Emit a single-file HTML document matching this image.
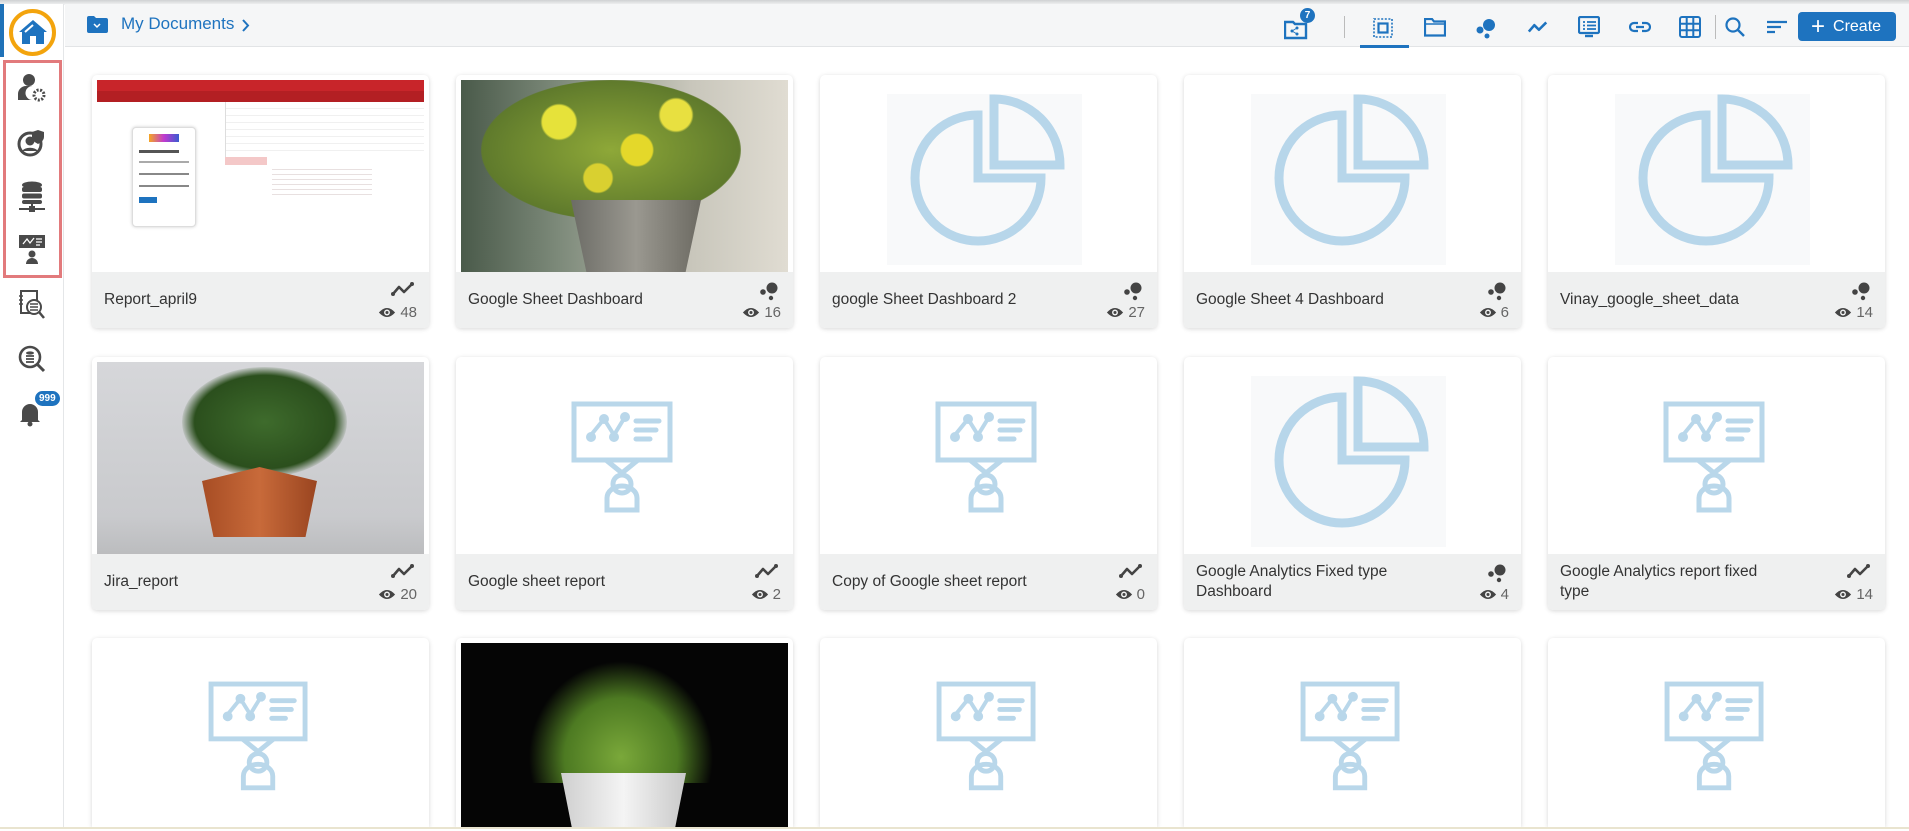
<!DOCTYPE html>
<html style="width:1909px;height:831px;overflow:hidden"><head><meta charset="utf-8"><style>
*{box-sizing:border-box;margin:0;padding:0}
body{width:1909px;height:831px;overflow:hidden;background:#fff;font-family:"Liberation Sans",sans-serif;position:relative}
#wrap{position:absolute;left:0;top:0;width:1909px;height:831px;overflow:hidden}
.topline{position:absolute;left:0;top:0;width:1909px;height:5px;background:linear-gradient(#cfd1d3,#f4f5f6)}
.side{position:absolute;left:0;top:4px;width:64px;height:823px;background:#fff;border-right:1px solid #e4e6e8}
.hdr{position:absolute;left:65px;top:4px;width:1844px;height:43px;background:#f5f6f7;border-bottom:1px solid #e2e4e6}
.card{position:absolute;width:337px;height:253px;background:#fff;border-radius:5px;box-shadow:0 1px 5px rgba(0,0,0,.16);overflow:hidden}
.r3{height:189px;border-radius:5px 5px 0 0}
.img{position:absolute;left:5px;top:5px;width:327px;height:193px;overflow:hidden}
.r3 .img{height:184px}
.ft{position:absolute;left:0;top:197px;width:337px;height:56px;background:#eff0f0}
.tt{position:absolute;left:12px;top:0;height:56px;width:225px;display:flex;align-items:center;font-size:15.5px;color:#333;line-height:20px}
.ty{position:absolute;right:14px;top:9px}
.vw{position:absolute;right:12px;top:32px;font-size:15px;color:#666;display:flex;align-items:center;gap:4px}
</style></head><body><div id="wrap">
<svg width="0" height="0" style="position:absolute">
<defs>
<symbol id="pie" viewBox="0 0 337 193"><rect x="67" y="19" width="195" height="171" fill="#f8f9fa"/><path d="M158 40 A63 63 0 1 0 221 103 L158 103 Z" fill="none" stroke="#b7d6ea" stroke-width="9"/><path d="M174 24 A66 66 0 0 1 240 90 L174 90 Z" fill="none" stroke="#b7d6ea" stroke-width="9"/></symbol>
<symbol id="pres" viewBox="0 0 337 193"><g fill="none" stroke="#b9d7ea" stroke-width="5"><rect x="118" y="47" width="96" height="56"/><path d="M150 103 L166 116 L182 103"/><circle cx="166" cy="127" r="9"/><path d="M151 153 V141 a15 12 0 0 1 30 0 V153 Z"/><path d="M135 78 L148 62 L158 78 L169 60" stroke-width="4"/><path d="M180 64h23M180 73h20M180 82h14" stroke-linecap="round" stroke-width="5"/></g><g fill="#b9d7ea"><circle cx="135" cy="80" r="5"/><circle cx="148" cy="62" r="5"/><circle cx="158" cy="80" r="5"/><circle cx="169" cy="60" r="5"/></g></symbol>
<symbol id="trend" viewBox="0 0 24 16"><path d="M2 13 L8 6 L13 11 L21 3" fill="none" stroke="#444" stroke-width="2.6" stroke-linejoin="round"/><circle cx="2" cy="13" r="2" fill="#444"/><circle cx="21" cy="3" r="2" fill="#444"/></symbol>
<symbol id="dots" viewBox="0 0 20 20"><circle cx="13" cy="7" r="5.5" fill="#444"/><circle cx="4" cy="11" r="2.8" fill="#444"/><circle cx="12" cy="17" r="2.2" fill="#444"/></symbol>
<symbol id="eye" viewBox="0 0 20 14"><path d="M1 7 Q10 -3 19 7 Q10 17 1 7Z" fill="#444"/><circle cx="10" cy="7" r="3.3" fill="#eff0f0"/><circle cx="10" cy="7" r="1.7" fill="#444"/></symbol>
</defs></svg>
<div class="topline"></div>
<div class="side">
<div style="position:absolute;left:0;top:0;width:4px;height:53px;background:#1f72b8"></div>
<div style="position:absolute;left:9px;top:5px;width:47px;height:47px;border:4px solid #f3a40d;border-radius:50%"></div>
<svg style="position:absolute;left:18px;top:14px" width="30" height="28" viewBox="0 0 30 28"><path d="M15 2 L1 14 L4 14 L4 26 L12 26 L12 18 L18 18 L18 26 L26 26 L26 14 L29 14 Z" fill="#1e73bf"/><path d="M15 7 L7 14" stroke="#fff" stroke-width="2"/></svg>
<div style="position:absolute;left:3px;top:56px;width:59px;height:218px;border:3px solid #e27a7c"></div>
<svg style="position:absolute;left:17px;top:69px" width="30" height="30" viewBox="0 0 30 30"><circle cx="12" cy="7" r="6" fill="#4a4a4a"/><path d="M1 27 v-6 a8 8 0 0 1 8-8 h7 a6 6 0 0 0 -1 14Z" fill="#4a4a4a"/><circle cx="22" cy="22" r="5" fill="none" stroke="#4a4a4a" stroke-width="3" stroke-dasharray="2 1.5"/></svg>
<svg style="position:absolute;left:17px;top:124px" width="30" height="30" viewBox="0 0 30 30"><circle cx="13" cy="16" r="11" fill="none" stroke="#4a4a4a" stroke-width="3"/><circle cx="13" cy="13" r="4.5" fill="#4a4a4a"/><path d="M5 23 a9 6 0 0 1 16 0" fill="#4a4a4a"/><path d="M21 2 l6 2 v5 q0 4 -6 7 q-6 -3 -6 -7 v-5z" fill="#4a4a4a"/></svg>
<svg style="position:absolute;left:18px;top:177px" width="28" height="32" viewBox="0 0 28 32"><ellipse cx="14" cy="4" rx="10" ry="3.5" fill="#4a4a4a"/><rect x="4" y="6" width="20" height="5" rx="2" fill="#4a4a4a"/><rect x="4" y="12.5" width="20" height="5" rx="2" fill="#4a4a4a"/><rect x="4" y="19" width="20" height="4" rx="2" fill="#4a4a4a"/><path d="M1 28h26M14 23v5" stroke="#4a4a4a" stroke-width="2"/><rect x="11" y="25" width="6" height="6" fill="#4a4a4a"/></svg>
<svg style="position:absolute;left:18px;top:230px" width="28" height="32" viewBox="0 0 28 32"><rect x="1" y="1" width="26" height="13" fill="#4a4a4a"/><path d="M5 10 l4-5 l3 4 l4-5 M18 5h6M18 8h6M18 11h4" stroke="#fff" stroke-width="1.3" fill="none"/><circle cx="14" cy="20" r="3.5" fill="#4a4a4a"/><path d="M8 30 a6 6 0 0 1 12 0z" fill="#4a4a4a"/></svg>
<svg style="position:absolute;left:19px;top:286px" width="26" height="30" viewBox="0 0 26 30"><rect x="2" y="1" width="16" height="22" fill="none" stroke="#4a4a4a" stroke-width="2"/><circle cx="15" cy="17" r="7" fill="#fff" stroke="#4a4a4a" stroke-width="2"/><path d="M11 14h8M11 17h8M11 20h8" stroke="#4a4a4a" stroke-width="1.6"/><path d="M20 22 l5 6" stroke="#4a4a4a" stroke-width="2.5"/><path d="M0 6h4M0 10h4M0 14h4" stroke="#4a4a4a" stroke-width="1.5"/></svg>
<svg style="position:absolute;left:18px;top:341px" width="28" height="28" viewBox="0 0 28 28"><circle cx="12" cy="12" r="10" fill="none" stroke="#4a4a4a" stroke-width="2.6"/><path d="M19 19 l7 7" stroke="#4a4a4a" stroke-width="3"/><ellipse cx="12" cy="8" rx="4" ry="1.6" fill="#4a4a4a"/><path d="M8 11h8M8 14h8M8 17h8" stroke="#4a4a4a" stroke-width="1.8"/></svg>
<svg style="position:absolute;left:18px;top:395px" width="24" height="28" viewBox="0 0 24 28"><path d="M4 21 V13 a8 8 0 0 1 16 0 V21 L22 23 H2 Z" fill="#4a4a4a"/><circle cx="12" cy="25" r="2.5" fill="#4a4a4a"/></svg>
<div style="position:absolute;left:34px;top:386px;background:#1e73bf;color:#fff;font-size:10px;font-weight:bold;border-radius:9px;padding:2px 4px;border:1px solid #fff">999</div>
</div>
<div class="hdr">
<svg style="position:absolute;left:22px;top:12px" width="21" height="17" viewBox="0 0 21 17"><path d="M0 2 a2 2 0 0 1 2-2 h5 l2 2 h10 a2 2 0 0 1 2 2 v11 a2 2 0 0 1-2 2 h-17 a2 2 0 0 1-2-2z" fill="#1e73bf"/><path d="M7 8 l3 3 l3-3" stroke="#fff" stroke-width="1.5" fill="none"/></svg>
<div style="position:absolute;left:56px;top:10px;font-size:17px;color:#1e73bf">My Documents</div>
<svg style="position:absolute;left:176px;top:15px" width="9" height="13" viewBox="0 0 9 13"><path d="M2 1 l5 5.5 l-5 5.5" stroke="#1e73bf" stroke-width="2" fill="none"/></svg>
<svg style="position:absolute;left:1219px;top:12px" width="26" height="24" viewBox="0 0 26 24"><path d="M1 6 h8 l2 2 h11 v14 h-21z" fill="none" stroke="#1e73bf" stroke-width="2.4"/><circle cx="8" cy="15" r="1.5" fill="#1e73bf"/><circle cx="13" cy="12" r="1.5" fill="#1e73bf"/><circle cx="13" cy="18" r="1.5" fill="#1e73bf"/><path d="M8 15l5-3M8 15l5 3" stroke="#1e73bf" stroke-width="1"/></svg>
<div style="position:absolute;left:1235px;top:4px;width:15px;height:15px;border-radius:50%;background:#1e73bf;color:#fff;font-size:10px;font-weight:bold;text-align:center;line-height:15px">7</div>
<div style="position:absolute;left:1279px;top:12px;width:1px;height:22px;background:#bbb"></div>
<svg style="position:absolute;left:1308px;top:14px" width="20" height="20" viewBox="0 0 20 20"><rect x="1" y="1" width="18" height="18" fill="none" stroke="#1e73bf" stroke-width="1.6" stroke-dasharray="2 1.6"/><rect x="5.5" y="5.5" width="9" height="9" fill="none" stroke="#1e73bf" stroke-width="2.2"/></svg>
<div style="position:absolute;left:1295px;top:41px;width:49px;height:3px;background:#1e73bf"></div>
<svg style="position:absolute;left:1359px;top:14px" width="22" height="19" viewBox="0 0 22 19"><path d="M1 1 h7 l2 2.5 h11 v14 h-20z" fill="none" stroke="#1e73bf" stroke-width="2.2"/><path d="M1 6h20" stroke="#1e73bf" stroke-width="1.6"/></svg>
<svg style="position:absolute;left:1411px;top:13px" width="20" height="22" viewBox="0 0 20 22"><circle cx="13" cy="8" r="6" fill="#1e73bf"/><circle cx="4" cy="13" r="3.5" fill="#1e73bf"/><circle cx="11" cy="19" r="2.5" fill="#1e73bf"/></svg>
<svg style="position:absolute;left:1462px;top:15px" width="22" height="16" viewBox="0 0 24 16"><path d="M2 13 L8 6 L13 11 L21 3" fill="none" stroke="#1e73bf" stroke-width="2.8" stroke-linejoin="round"/></svg>
<svg style="position:absolute;left:1513px;top:12px" width="22" height="22" viewBox="0 0 22 22"><rect x="1" y="1" width="20" height="16" rx="1.5" fill="none" stroke="#1e73bf" stroke-width="2.2"/><path d="M5 6h2M9 6h9M5 9.5h2M9 9.5h9M5 13h2M9 13h9" stroke="#1e73bf" stroke-width="1.8"/><path d="M7 20h8" stroke="#1e73bf" stroke-width="2.4"/></svg>
<svg style="position:absolute;left:1564px;top:17px" width="22" height="12" viewBox="0 0 22 12"><path d="M9 2 H5 a4 4 0 0 0 0 8 H9 M13 2 H17 a4 4 0 0 1 0 8 H13 M7 6h8" fill="none" stroke="#1e73bf" stroke-width="2.2"/></svg>
<svg style="position:absolute;left:1614px;top:12px" width="22" height="22" viewBox="0 0 22 22"><rect x="1" y="1" width="20" height="20" rx="2" fill="none" stroke="#1e73bf" stroke-width="2"/><path d="M7.7 1v20M14.3 1v20M1 7.7h20M1 14.3h20" stroke="#1e73bf" stroke-width="2"/></svg>
<div style="position:absolute;left:1650px;top:11px;width:1px;height:24px;background:#bbb"></div>
<svg style="position:absolute;left:1660px;top:13px" width="21" height="21" viewBox="0 0 21 21"><circle cx="8" cy="8" r="6.5" fill="none" stroke="#1e73bf" stroke-width="2.2"/><path d="M13 13l6 6" stroke="#1e73bf" stroke-width="2.4"/></svg>
<svg style="position:absolute;left:1702px;top:16px" width="20" height="14" viewBox="0 0 20 14"><path d="M0 2h20M0 7h14M0 12h8" stroke="#1e73bf" stroke-width="2.2"/></svg>
<div style="position:absolute;left:1733px;top:8px;width:98px;height:29px;border-radius:4px;background:#1e73bf;color:#fff;font-size:16px;display:flex;align-items:center;padding-left:13px"><span style="font-size:24px;font-weight:300;margin-right:8px;line-height:20px">+</span>Create</div>
</div>

<div class="card" style="left:92px;top:75px"><div class="img" style="background:#fff">
<div style="position:absolute;left:0;top:0;width:327px;height:11px;background:#c8252a"></div>
<div style="position:absolute;left:0;top:11px;width:327px;height:11px;background:#b31f23"></div>
<div style="position:absolute;left:35px;top:47px;width:64px;height:100px;border:1px solid #ddd;border-radius:4px;background:#fff;box-shadow:0 0 3px #ccc"><div style="margin:6px auto 0;width:30px;height:8px;background:linear-gradient(90deg,#f5a623,#c03ad0,#3a5bd0)"></div><div style="margin:8px 6px;height:3px;background:#555;width:40px"></div><div style="margin:3px 6px;height:2px;background:#aaa"></div><div style="margin:10px 6px;height:2px;background:#888"></div><div style="margin:10px 6px;height:2px;background:#888"></div><div style="margin:6px 6px;height:6px;width:18px;background:#1e73bf"></div></div>
<div style="position:absolute;left:128px;top:22px;width:199px;height:55px;border-left:1px solid #ddd;background:repeating-linear-gradient(#fff 0 6px,#f0f0f0 6px 7px)"></div>
<div style="position:absolute;left:128px;top:77px;width:42px;height:8px;background:#f4c8c8"></div>
<div style="position:absolute;left:175px;top:85px;width:100px;height:30px;background:repeating-linear-gradient(#fff 0 4px,#e8e0e0 4px 5px)"></div>
</div><div class="ft"><div class="tt">Report_april9</div><svg class="ty" width="24" height="16"><use href="#trend"/></svg><div class="vw"><svg width="18" height="13"><use href="#eye"/></svg>48</div></div></div>

<div class="card" style="left:456px;top:75px"><div class="img" style="background:linear-gradient(90deg,#4a5a4a,#7d8a7a 30%,#c8c6bb 70%,#e0dcd2)">
<div style="position:absolute;left:20px;top:0;width:260px;height:140px;border-radius:50%;background:radial-gradient(circle at 30% 30%,#e6e23a 0 8%,transparent 9%),radial-gradient(circle at 60% 50%,#e4d82a 0 9%,transparent 10%),radial-gradient(circle at 45% 70%,#d9d030 0 8%,transparent 9%),radial-gradient(circle at 75% 25%,#e8e040 0 7%,transparent 8%),radial-gradient(#8ea838,#5f7a2c 70%,transparent 72%)"></div>
<div style="position:absolute;left:110px;top:120px;width:130px;height:73px;background:linear-gradient(90deg,#6c6c66,#9a9890,#6c6a62);clip-path:polygon(0 0,100% 0,88% 100%,12% 100%)"></div>
</div><div class="ft"><div class="tt">Google Sheet Dashboard</div><svg class="ty" width="20" height="20"><use href="#dots"/></svg><div class="vw"><svg width="18" height="13"><use href="#eye"/></svg>16</div></div></div>

<div class="card" style="left:820px;top:75px"><svg style="position:absolute;left:0;top:0" width="337" height="193"><use href="#pie"/></svg><div class="ft"><div class="tt">google Sheet Dashboard 2</div><svg class="ty" width="20" height="20"><use href="#dots"/></svg><div class="vw"><svg width="18" height="13"><use href="#eye"/></svg>27</div></div></div>

<div class="card" style="left:1184px;top:75px"><svg style="position:absolute;left:0;top:0" width="337" height="193"><use href="#pie"/></svg><div class="ft"><div class="tt">Google Sheet 4 Dashboard</div><svg class="ty" width="20" height="20"><use href="#dots"/></svg><div class="vw"><svg width="18" height="13"><use href="#eye"/></svg>6</div></div></div>

<div class="card" style="left:1548px;top:75px"><svg style="position:absolute;left:0;top:0" width="337" height="193"><use href="#pie"/></svg><div class="ft"><div class="tt">Vinay_google_sheet_data</div><svg class="ty" width="20" height="20"><use href="#dots"/></svg><div class="vw"><svg width="18" height="13"><use href="#eye"/></svg>14</div></div></div>

<div class="card" style="left:92px;top:357px"><div class="img" style="background:linear-gradient(#d6d7da,#c9cacd 80%,#bbbcbe)">
<div style="position:absolute;left:85px;top:5px;width:165px;height:110px;border-radius:50%;background:radial-gradient(#3e6b2c,#2b4f1d 60%,transparent 72%)"></div>
<div style="position:absolute;left:105px;top:105px;width:115px;height:70px;background:linear-gradient(90deg,#a74d24,#c86a3a 50%,#9a4520);clip-path:polygon(0 20%,50% 0,100% 20%,90% 100%,10% 100%)"></div>
</div><div class="ft"><div class="tt">Jira_report</div><svg class="ty" width="24" height="16"><use href="#trend"/></svg><div class="vw"><svg width="18" height="13"><use href="#eye"/></svg>20</div></div></div>

<div class="card" style="left:456px;top:357px"><svg style="position:absolute;left:0;top:0" width="337" height="193"><use href="#pres"/></svg><div class="ft"><div class="tt">Google sheet report</div><svg class="ty" width="24" height="16"><use href="#trend"/></svg><div class="vw"><svg width="18" height="13"><use href="#eye"/></svg>2</div></div></div>

<div class="card" style="left:820px;top:357px"><svg style="position:absolute;left:0;top:0" width="337" height="193"><use href="#pres"/></svg><div class="ft"><div class="tt">Copy of Google sheet report</div><svg class="ty" width="24" height="16"><use href="#trend"/></svg><div class="vw"><svg width="18" height="13"><use href="#eye"/></svg>0</div></div></div>

<div class="card" style="left:1184px;top:357px"><svg style="position:absolute;left:0;top:0" width="337" height="193"><use href="#pie"/></svg><div class="ft"><div class="tt">Google Analytics Fixed type Dashboard</div><svg class="ty" width="20" height="20"><use href="#dots"/></svg><div class="vw"><svg width="18" height="13"><use href="#eye"/></svg>4</div></div></div>

<div class="card" style="left:1548px;top:357px"><svg style="position:absolute;left:0;top:0" width="337" height="193"><use href="#pres"/></svg><div class="ft"><div class="tt">Google Analytics report fixed type</div><svg class="ty" width="24" height="16"><use href="#trend"/></svg><div class="vw"><svg width="18" height="13"><use href="#eye"/></svg>14</div></div></div>

<div class="card r3" style="left:92px;top:638px"><svg style="position:absolute;left:0;top:0" width="337" height="189"><use href="#pres"/></svg></div>
<div class="card r3" style="left:456px;top:638px"><div class="img" style="background:#050505">
<div style="position:absolute;left:60px;top:10px;width:200px;height:130px;background:radial-gradient(ellipse at 50% 80%,#7aa83a,#4d7a22 40%,transparent 65%)"></div>
<div style="position:absolute;left:100px;top:130px;width:125px;height:63px;background:linear-gradient(90deg,#cfcfcf,#f4f4f4 50%,#c9c9c9);clip-path:polygon(0 0,100% 0,90% 100%,10% 100%)"></div>
</div></div>
<div class="card r3" style="left:820px;top:638px"><svg style="position:absolute;left:0;top:0" width="337" height="189"><use href="#pres"/></svg></div>
<div class="card r3" style="left:1184px;top:638px"><svg style="position:absolute;left:0;top:0" width="337" height="189"><use href="#pres"/></svg></div>
<div class="card r3" style="left:1548px;top:638px"><svg style="position:absolute;left:0;top:0" width="337" height="189"><use href="#pres"/></svg></div>
<div style="position:absolute;left:0;top:827px;width:1909px;height:4px;background:#fff;border-top:2px solid #e9e4cf"></div>
</div></body></html>
